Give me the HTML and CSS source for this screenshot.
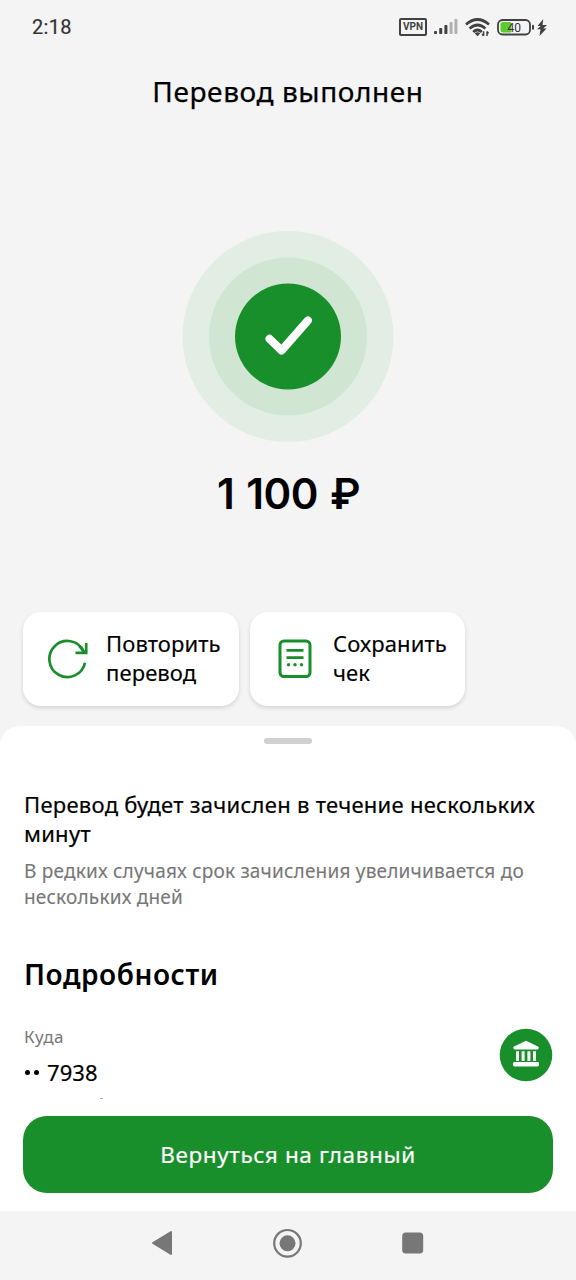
FILE: index.html
```html
<!DOCTYPE html>
<html lang="ru">
<head>
<meta charset="utf-8">
<title>Перевод выполнен</title>
<link rel="stylesheet" href="styles.css">
</head>
<body>
<main class="screen">
  <header class="status">
    <time class="clock">2:18</time>
    <div class="status-icons">
      <span class="vpn">VPN</span>
      <svg class="signal" width="24" height="16" viewBox="0 0 24 16">
        <g fill="#414141"><rect x="0" y="12" width="3" height="3" rx=".8"/><rect x="5.2" y="9" width="3" height="6" rx=".8"/><rect x="10.4" y="6" width="3" height="9" rx=".8"/></g>
        <g fill="#b0b0b0"><rect x="15.6" y="3" width="3" height="12" rx=".8"/><rect x="20.4" y="0" width="3" height="15" rx=".8"/></g>
      </svg>
      <svg class="wifi" width="25" height="19" viewBox="0 0 25 19">
        <g fill="none" stroke="#414141" stroke-width="2.700"><path d="M1 6.500Q12.500-3.500 24 6.500"/><path d="M4.600 10.500Q12.500 3.500 20.400 10.500"/><path d="M8.200 14Q12.500 10 16.800 14"/></g>
        <path d="M9.700 15.300Q12.500 13 15.300 15.300L12.500 18.200Z" fill="#414141"/>
        <path d="M18.600 13.200v4.600M17.100 16l1.500 2M22 18v-4.600M23.500 15.500l-1.500-2" stroke="#414141" stroke-width="1.500" fill="none"/>
      </svg>
      <svg class="battery" width="37" height="17" viewBox="0 0 37 17">
        <rect x="1" y="1" width="32" height="14.500" rx="4.500" fill="none" stroke="#414141" stroke-width="1.800"/>
        <path d="M6 3h8v10.500H6a2.500 2.500 0 0 1-2.500-2.500V5.500A2.500 2.500 0 0 1 6 3Z" fill="#5acb31"/>
        <rect x="35" y="5.800" width="2" height="5" rx="1" fill="#414141"/>
        <text x="17.200" y="12.600" text-anchor="middle" class="battery-level">40</text>
      </svg>
      <svg class="bolt" width="10" height="17" viewBox="0 0 10 17"><path d="M6.300 0 .5 7h3.300L0 10.300h3.500L2.500 17 9.500 9.500H6.200L10 6H5.500Z" fill="#414141"/></svg>
    </div>
  </header>
  <h1 class="title">Перевод выполнен</h1>
  <section class="result">
    <svg class="success" width="212" height="212" viewBox="0 0 212 212">
      <circle cx="106" cy="106.500" r="105.500" fill="#e2ede3"/>
      <circle cx="106" cy="106.500" r="79" fill="#d0e6d3"/>
      <circle cx="106" cy="106.500" r="53" fill="#188f2b"/>
      <path d="m87.500 108.800 12.100 11.700 26.300-30" fill="none" stroke="#fff" stroke-width="8" stroke-linecap="round" stroke-linejoin="round"/>
    </svg>
    <p class="amount">1 100 ₽</p>
  </section>
  <section class="actions">
    <button class="action repeat">
      <svg width="40" height="40" viewBox="0 0 40 40" fill="none" stroke="#188f2b" stroke-width="2.700"><path d="M37 23.700A18 18 0 1 1 35.500 12"/><path d="M38.200 4v9.800H27.500M36.700 13.500l-5.500-6.500" /></svg>
      <span>Повторить<br>перевод</span>
    </button>
    <button class="action save">
      <svg width="34" height="40" viewBox="0 0 34 40" fill="none" stroke="#188f2b"><rect x="2" y="2" width="30" height="35.500" rx="4" stroke-width="3"/><path d="M8.500 11.300h17M8.500 18.600h17" stroke-width="2.700"/><g fill="#188f2b" stroke="none"><circle cx="10.500" cy="25.800" r="1.700"/><circle cx="17" cy="25.800" r="1.700"/><circle cx="23.500" cy="25.800" r="1.700"/></g></svg>
      <span>Сохранить<br>чек</span>
    </button>
  </section>
  <section class="sheet">
    <div class="handle"></div>
    <p class="notice">Перевод будет зачислен в течение нескольких<br>минут</p>
    <p class="hint">В редких случаях срок зачисления увеличивается до<br>нескольких дней</p>
    <h2 class="details">Подробности</h2>
    <div class="recipient">
      <div>
        <p class="label">Куда</p>
        <p class="account"><span class="mask"><i></i><i></i></span>7938</p>
      </div>
      <svg class="bank" width="54" height="54" viewBox="0 0 54 54">
        <circle cx="27" cy="27" r="26.300" fill="#188f2b"/>
        <g fill="#fff"><path d="M14.500 20.500q-1-1.200.5-2L27 12.700l12 5.800q1.500.8.5 2-.5 1-1.500 1H16q-1 0-1.500-1Z"/><path d="M17 23.200h3V33h-3zM22.600 23.200h3V33h-3zM28.400 23.200h3V33h-3zM34 23.200h3V33h-3z"/><rect x="14" y="34" width="26" height="4.500" rx="1.400"/></g>
      </svg>
    </div>
    <div class="clipped"></div>
    <button class="primary">Вернуться на главный</button>
  </section>
  <nav class="navbar">
    <svg width="22" height="26" viewBox="0 0 22 26"><path d="M2 13 20 2v22Z" fill="#777" stroke="#777" stroke-width="2" stroke-linejoin="round"/></svg>
    <svg width="30" height="30" viewBox="0 0 30 30"><circle cx="14.500" cy="15.300" r="13.300" fill="none" stroke="#777" stroke-width="2.200"/><circle cx="14.500" cy="15.300" r="8" fill="#777"/></svg>
    <svg width="22" height="22" viewBox="0 0 22 22"><rect x=".2" y=".5" width="21" height="21" rx="3.500" fill="#777"/></svg>
  </nav>
</main>
</body>
</html>
```
FILE: styles.css
```css
* { box-sizing: border-box; }
body { margin: 0; background: #f4f4f4; color: #000; font-family: "Noto Sans", sans-serif; }
h1, h2, p { margin: 0; white-space: nowrap; }
button { border: 0; padding: 0; font: inherit; color: inherit; text-align: left; white-space: nowrap; }
svg { display: block; flex: none; }
.screen { width: 576px; height: 1280px; overflow: hidden; display: flex; flex-direction: column; }
.status { height: 54px; padding: 0 29px 0 32px; display: flex; align-items: center; justify-content: space-between; }
.clock { font: 400 20px/24px Roboto, sans-serif; letter-spacing: .3px; -webkit-text-stroke: .2px #333; color: #333; }
.status-icons { display: flex; align-items: center; }
.vpn { width: 28px; height: 18px; border: 2px solid #414141; border-radius: 2px; font: 700 10px/14px Roboto, sans-serif; color: #414141; text-align: center; }
.signal { margin-left: 7px; }
.wifi { margin-left: 7px; }
.battery { margin-left: 7px; }
.battery-level { font: 400 12px Roboto, sans-serif; fill: #333; }
.bolt { margin-left: 3px; }
.title { height: 76px; font-size: 28px; line-height: 75px; font-weight: 400; letter-spacing: .6px; -webkit-text-stroke: .25px #000; text-align: center; }
.result { height: 482px; padding-top: 100px; display: flex; flex-direction: column; align-items: center; }
.amount { margin-top: 22px; padding-left: 1px; font: 600 42px/60px Inter, sans-serif; letter-spacing: -.5px; word-spacing: 2px; }
.actions { height: 114px; padding-left: 23px; display: flex; align-items: flex-start; gap: 11px; }
.action { height: 94px; background: #fff; border-radius: 18px; box-shadow: 0 2px 4px #0002; display: flex; align-items: center; font-size: 22px; line-height: 29px; letter-spacing: .1px; -webkit-text-stroke: .15px #000; }
.action span { padding-bottom: 2px; }
.repeat { width: 216px; padding-left: 25px; gap: 18px; }
.save { width: 215px; padding-left: 28px; gap: 21px; }
.sheet { height: 485px; padding: 12px 23px 0; background: #fff; border-radius: 20px 20px 0 0; display: flex; flex-direction: column; }
.handle { width: 48px; height: 6px; border-radius: 3px; background: #d0d0d0; align-self: center; }
.notice { margin: 46px 0 0 1px; font-size: 22px; line-height: 29px; letter-spacing: .28px; -webkit-text-stroke: .2px #000; }
.hint { margin: 10px 0 0 1px; font-size: 19px; line-height: 26px; letter-spacing: .2px; -webkit-text-stroke: .1px #777; color: #777; }
.details { margin: 44px 0 0 1px; font-size: 28px; line-height: 40px; font-weight: 600; letter-spacing: .55px; }
.recipient { height: 66px; margin-top: 30px; padding-left: 1px; display: flex; justify-content: space-between; }
.bank { margin-top: 4px; }
.label { font-size: 17px; line-height: 26px; letter-spacing: .5px; color: #777; }
.account { margin-top: 7px; font-size: 22px; line-height: 31px; letter-spacing: .1px; -webkit-text-stroke: .2px #000; display: flex; align-items: center; }
.mask { display: flex; gap: 4px; margin-right: 8px; padding-left: 1px; }
.mask i { width: 5px; height: 5px; border-radius: 50%; background: #000; }
.clipped { width: 3px; height: 1px; margin: 8px 0 0 77px; background: #aaa; }
.primary { height: 77px; margin-top: 17px; border-radius: 24px; background: #188f2b; color: #fff; font-size: 22.500px; letter-spacing: .63px; -webkit-text-stroke: .2px #fff; text-align: center; }
.navbar { height: 69px; padding: 0 152px 5px 151px; display: flex; align-items: center; justify-content: space-between; }
```
